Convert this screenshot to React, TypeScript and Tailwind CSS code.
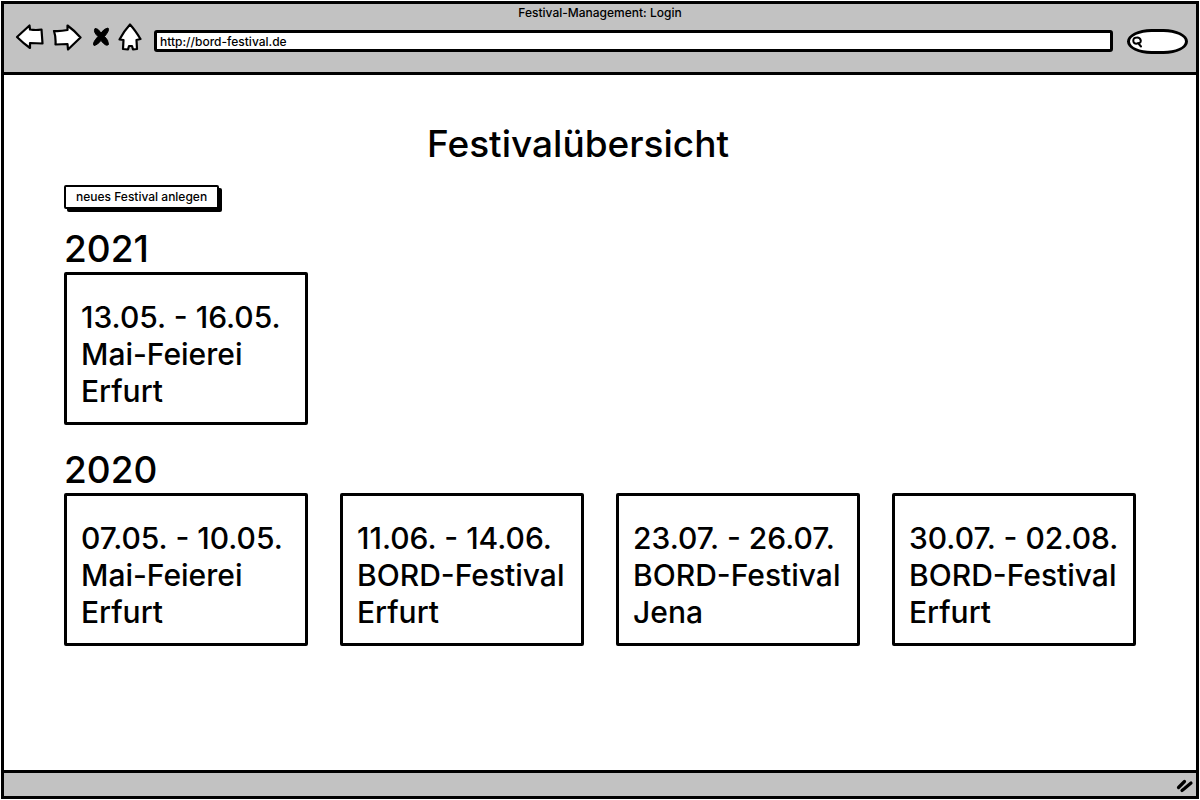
type Festival = { dates: string; name: string; city: string };

const years: { year: string; festivals: Festival[] }[] = [
  { year: "2021", festivals: [{ dates: "13.05. - 16.05.", name: "Mai-Feierei", city: "Erfurt" }] },
  {
    year: "2020",
    festivals: [
      { dates: "07.05. - 10.05.", name: "Mai-Feierei", city: "Erfurt" },
      { dates: "11.06. - 14.06.", name: "BORD-Festival", city: "Erfurt" },
      { dates: "23.07. - 26.07.", name: "BORD-Festival", city: "Jena" },
      { dates: "30.07. - 02.08.", name: "BORD-Festival", city: "Erfurt" },
    ],
  },
];

const outline = {
  fill: "white",
  stroke: "black",
  strokeWidth: 2.2,
  strokeLinejoin: "round" as const,
  strokeLinecap: "round" as const,
};

function BackIcon() {
  return (
    <svg width="30" height="28" viewBox="0 0 30 28" aria-hidden="true">
      <path {...outline} d="M2 14 L14.5 2.5 L15 6.5 Q21 7.5 26.5 6.5 L27.5 20.5 L15 20 L15 25 Q8 20 2 14 Z" />
    </svg>
  );
}

function ForwardIcon() {
  return (
    <svg width="30" height="28" viewBox="0 0 30 28" aria-hidden="true">
      <path {...outline} d="M2.5 8 Q8 8.5 15.5 7 L15.5 2.5 Q23 8 28.5 14.5 L16 26.5 L15.5 21 L3.5 21.5 Q4 14 2 8 Z" />
    </svg>
  );
}

function StopIcon() {
  return (
    <svg width="18" height="20" viewBox="0 0 18 20" aria-hidden="true">
      <path
        stroke="black"
        strokeWidth="1"
        strokeLinejoin="round"
        d="M3 1.5 Q6 1 9 6 Q12 1.5 16 1 Q18 3 12.5 9.5 Q16.5 13 16.5 17.5 Q14 20 9 13.5 Q5 18.5 2 18.5 Q0 16 6 9.5 Q1 5 3 1.5 Z"
      />
    </svg>
  );
}

function HomeIcon() {
  return (
    <svg width="24" height="28" viewBox="0 0 24 28" aria-hidden="true">
      <path {...outline} d="M12 1.5 Q17 7 22.5 16 L18.5 17 L19 26 L15 26.5 L14 23 L11 23 L10 26.5 L5 26 L5.5 17 L1.5 16.5 Q6 8 12 1.5 Z" />
    </svg>
  );
}

function FestivalCard({ dates, name, city }: Festival) {
  return (
    <li className="rounded-[2px] border-[3px] border-black px-3.5 pt-6 pb-3 text-[30px] leading-[37px] whitespace-nowrap">
      <p>{dates}</p>
      <p>{name}</p>
      <p>{city}</p>
    </li>
  );
}

export default function App() {
  return (
    <div className="flex min-h-screen flex-col bg-white p-px font-['Inter','Liberation_Sans',sans-serif] font-medium text-black">
      <div className="flex grow flex-col border-[3px] border-black">
        <header className="border-b-[3px] border-black bg-[#c2c2c2] pb-[18px]">
          <p className="text-center text-xs leading-[18px]">Festival-Management: Login</p>
          <div className="flex items-start pr-2 pl-[11px]">
            <nav className="flex h-[30px] items-center" aria-label="Browser">
              <button type="button" aria-label="Zurück"><BackIcon /></button>
              <button type="button" aria-label="Vorwärts" className="ml-[7px]"><ForwardIcon /></button>
              <button type="button" aria-label="Abbrechen" className="ml-2.5"><StopIcon /></button>
              <button type="button" aria-label="Startseite" className="ml-2"><HomeIcon /></button>
            </nav>
            <input
              type="text"
              aria-label="Adresse"
              defaultValue="http://bord-festival.de"
              className="mt-2 ml-3 h-[22px] min-w-0 grow rounded-[3px] border-[3px] border-black bg-white px-[3px] text-xs outline-none"
            />
            <label className="mt-[7px] ml-3.5 flex h-[25px] w-[61px] items-center rounded-[40%/50%] border-[3px] border-black bg-white pl-0.5">
              <svg width="11" height="12" viewBox="0 0 11 12" className="shrink-0" aria-hidden="true">
                <path
                  fill="none"
                  stroke="black"
                  strokeWidth="2"
                  strokeLinecap="round"
                  d="M5 1.5 Q1.2 1.5 1.3 4.8 Q1.6 8 5 7.6 Q9 7.5 8.8 4.5 Q8 1.4 5 1.5 M6 7 L9 10.5"
                />
              </svg>
              <input type="text" aria-label="Suche" className="w-full min-w-0 bg-transparent px-1 text-xs outline-none" />
            </label>
          </div>
        </header>

        <main className="grow px-[60px] pt-[46px] pb-10">
          <h1 className="pr-11 text-center text-[37px] leading-[46px]">Festivalübersicht</h1>
          <button
            type="button"
            className="mt-[18px] block h-6 rounded-[2px] border-2 border-black bg-white px-2.5 text-xs shadow-[3px_3px_0_#000]"
          >
            neues Festival anlegen
          </button>
          <div className="mt-[17px] flex flex-col gap-[22px]">
            {years.map(({ year, festivals }) => (
              <section key={year}>
                <h2 className="text-[37px] leading-[46px]">{year}</h2>
                <ul className="grid grid-cols-4 gap-8">
                  {festivals.map((festival) => (
                    <FestivalCard key={festival.dates} {...festival} />
                  ))}
                </ul>
              </section>
            ))}
          </div>
        </main>

        <footer className="flex h-[26px] items-center justify-end border-t-[3px] border-black bg-[#c2c2c2] pr-0.5">
          <svg width="18" height="16" viewBox="0 0 18 16" aria-hidden="true">
            <path
              fill="none"
              stroke="black"
              strokeWidth="3.2"
              strokeLinecap="round"
              d="M2.5 10.5 L8.5 4.5 M6 13.5 L8.5 11.5 L15 6"
            />
          </svg>
        </footer>
      </div>
    </div>
  );
}
